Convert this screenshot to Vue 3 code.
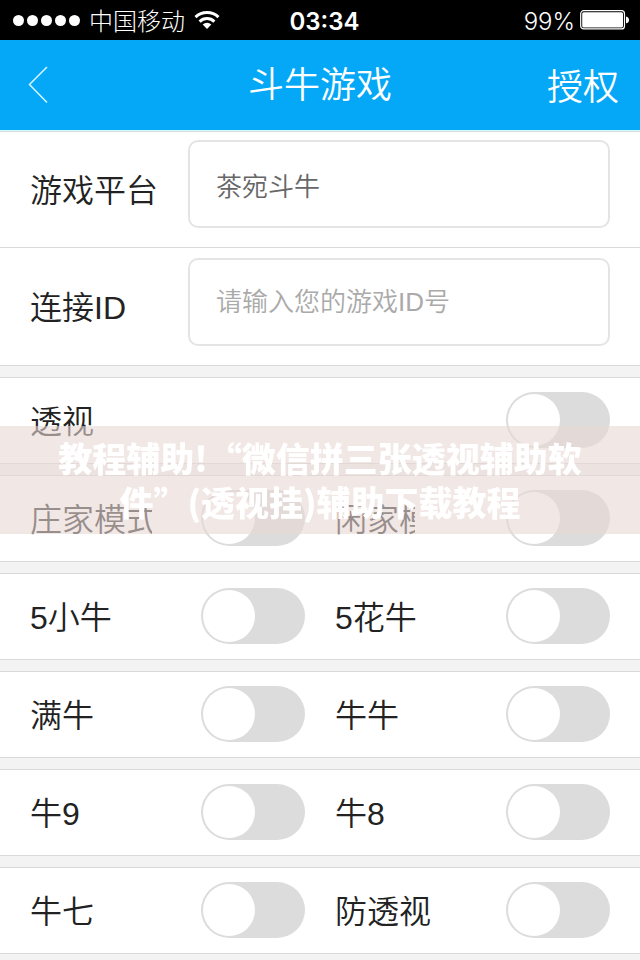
<script setup>
import { ref } from "vue";

const platform = ref("茶宛斗牛");
const gameId = ref("");

const rows = ref([
  [{ id: "see", label: "透视", on: false }],
  [
    { id: "banker", label: "庄家模式", on: false },
    { id: "player", label: "闲家模式", on: false, narrow: true },
  ],
  [
    { id: "small5", label: "5小牛", on: false },
    { id: "flower5", label: "5花牛", on: false },
  ],
  [
    { id: "full", label: "满牛", on: false },
    { id: "niuniu", label: "牛牛", on: false },
  ],
  [
    { id: "niu9", label: "牛9", on: false },
    { id: "niu8", label: "牛8", on: false },
  ],
  [
    { id: "niu7", label: "牛七", on: false },
    { id: "guard", label: "防透视", on: false },
  ],
]);
</script>

<template>
  <div class="page">
    <div class="status">
      <div class="carrier">
        <div class="dots"><i v-for="n in 5" :key="n"></i></div>
        <span>中国移动</span>
        <svg width="26" height="20" viewBox="0 0 26 20">
          <g fill="none" stroke="#fff" stroke-width="3">
            <path d="M1.5 7.2a16.6 16.6 0 0 1 23 0" />
            <path d="M5.6 11.6a10.6 10.6 0 0 1 14.8 0" />
          </g>
          <path d="M13 19l-4.3-4.6a6.2 6.2 0 0 1 8.6 0z" fill="#fff" />
        </svg>
      </div>
      <b class="time">03:34</b>
      <div class="power">
        <span>99%</span>
        <svg width="50" height="20" viewBox="0 0 50 20">
          <rect x="0.7" y="0.7" width="43.8" height="18.2" rx="3" fill="none" stroke="#fff" stroke-width="1.2" />
          <rect x="2.2" y="2.2" width="40.8" height="15.2" rx="1.5" fill="#fff" />
          <path d="M46 6.5q3 .6 3 3.4t-3 3.4z" fill="#fff" />
        </svg>
      </div>
    </div>

    <header class="nav">
      <button class="back" aria-label="返回">
        <svg width="20" height="38" viewBox="0 0 20 38">
          <path d="M19 1L1.500 18.500L19 36.500" fill="none" stroke="#d8f6ff" stroke-width="1.500" />
        </svg>
      </button>
      <h1>斗牛游戏</h1>
      <button class="auth">授权</button>
    </header>

    <main>
      <section class="form">
        <div class="field">
          <label for="platform">游戏平台</label>
          <input id="platform" v-model="platform" type="text" />
        </div>
        <div class="field">
          <label for="gameId">连接ID</label>
          <input id="gameId" v-model="gameId" type="text" placeholder="请输入您的游戏ID号" />
        </div>
      </section>

      <section v-for="(row, i) in rows" :key="i" class="row" :class="{ single: row.length === 1 }">
        <div v-for="item in row" :key="item.id" class="cell">
          <label :for="item.id" :class="{ narrow: item.narrow }">{{ item.label }}</label>
          <input :id="item.id" v-model="item.on" type="checkbox" class="switch" />
        </div>
      </section>
    </main>

    <div class="banner">教程辅助!“微信拼三张透视辅助软件”(透视挂)辅助下载教程</div>
  </div>
</template>

<style>
body {
  margin: 0;
  background: #f3f3f3;
}
</style>

<style scoped>
.page {
  font-family: "Liberation Sans", "Noto Sans CJK SC", sans-serif;
  font-weight: 350;
  color: #222;
}
button {
  border: 0;
  padding: 0;
  background: none;
  font: inherit;
  color: inherit;
}
svg {
  display: block;
}
.status {
  display: grid;
  grid-template-columns: 1fr auto 1fr;
  align-items: center;
  height: 40px;
  padding: 0 10px 0 13px;
  background: #000;
  color: #fff;
  font-family: Inter, "Noto Sans CJK SC", sans-serif;
  font-size: 24px;
  font-weight: 300;
  line-height: 36px;
}
.carrier,
.power {
  display: flex;
  align-items: center;
}
.carrier {
  gap: 9px;
}
.power {
  justify-content: flex-end;
  gap: 5px;
}
.status span,
.time {
  padding-top: 3px;
}
.dots {
  display: flex;
  gap: 3px;
}
.dots i {
  width: 11px;
  height: 11px;
  border-radius: 50%;
  background: #fff;
}
.time {
  padding-left: 6px;
  font-weight: 600;
}
.nav {
  display: grid;
  grid-template-columns: 1fr auto 1fr;
  align-items: center;
  height: 90px;
  padding: 0 21px;
  border-bottom: 1px solid #cffafc;
  background: #05a8f6;
  color: #fff;
  font-size: 36px;
}
.nav h1 {
  margin: 0;
  padding-bottom: 6px;
  font-size: 36px;
  font-weight: 350;
}
.back {
  justify-self: start;
  padding-left: 7px;
}
.auth {
  justify-self: end;
  padding-bottom: 2px;
}
.form {
  border-top: 1px solid #ddd;
  background: #fff;
}
.field {
  display: flex;
  align-items: center;
  padding: 0 30px;
  border-bottom: 1px solid #d9d9d9;
}
.field label {
  width: 158px;
  padding-bottom: 3px;
  font-size: 32px;
}
.field input {
  flex: 1;
  min-width: 0;
  box-sizing: border-box;
  height: 88px;
  margin: 10px 0 19px;
  padding: 0 26px;
  border: 2px solid #e4e4e4;
  border-radius: 10px;
  background: #fff;
  color: #666;
  font: inherit;
  font-size: 26px;
  line-height: 38px;
}
.field:first-child input {
  margin-top: 8px;
}
.field input::placeholder {
  color: #aaa;
}
.row {
  display: grid;
  grid-template-columns: 1fr 1fr;
  gap: 30px;
  margin-top: 11px;
  padding: 14px 30px 15px;
  border: solid #d9d9d9;
  border-width: 1px 0;
  background: #fff;
}
.row.single {
  grid-template-columns: 1fr;
}
.cell {
  display: flex;
  align-items: center;
  justify-content: space-between;
  min-width: 0;
}
.cell label {
  max-width: 122px;
  padding-bottom: 3px;
  overflow: hidden;
  white-space: nowrap;
  font-size: 32px;
}
.cell label.narrow {
  max-width: 80px;
}
.switch {
  appearance: none;
  flex: none;
  width: 104px;
  height: 56px;
  margin: 0;
  padding: 2px;
  border-radius: 28px;
  background: #dcdcdc;
}
.switch::before {
  content: "";
  display: block;
  width: 52px;
  height: 52px;
  border-radius: 50%;
  background: #fff;
}
.switch:checked {
  background: #05a8f6;
}
.switch:checked::before {
  margin-left: auto;
}
.banner {
  position: fixed;
  top: 50%;
  left: 0;
  right: 0;
  transform: translateY(-50%);
  padding: 10px 50px;
  background: rgba(232, 215, 212, 0.6);
  color: #fff;
  font-family: "Noto Sans CJK SC", sans-serif;
  font-size: 34px;
  font-weight: 900;
  line-height: 44px;
  text-align: center;
}
</style>
